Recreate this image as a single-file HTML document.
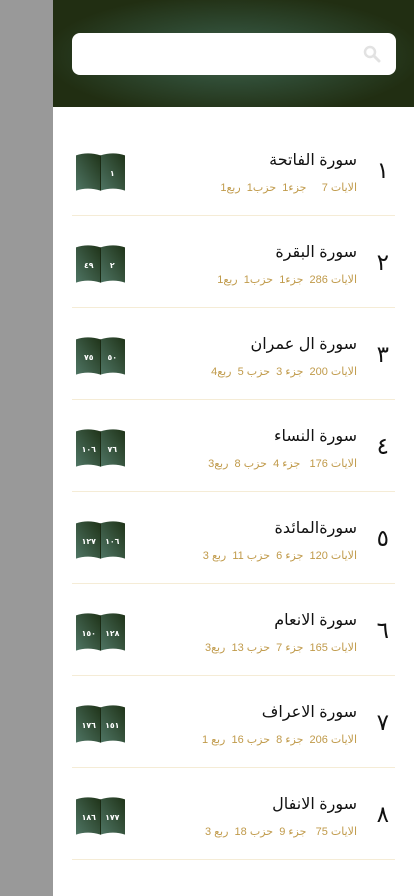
<!DOCTYPE html><html><head><meta charset="utf-8"><style>
body{margin:0;width:414px;height:896px;overflow:hidden;background:#fff;font-family:"Liberation Sans","DejaVu Sans",sans-serif;position:relative}
.side{position:absolute;left:0;top:0;width:53px;height:896px;background:#999}
.hdr{position:absolute;left:53px;top:0;width:361px;height:107px;background:radial-gradient(ellipse 190px 62px at 50% 52%,#42634a 0%,#2f4a33 45%,#212e12 100%)}
.search{position:absolute;left:72px;top:33px;width:324px;height:42px;background:#fff;border-radius:8px}
.row{position:absolute;left:72px;width:323px;height:91px;border-bottom:1px solid #f5ecd6}
.num{position:absolute;right:6px;top:34px;font-size:23px;color:#111;font-family:"DejaVu Sans",sans-serif}
.title{position:absolute;right:38px;top:26px;font-size:16px;color:#111;direction:rtl;white-space:nowrap}
.meta{position:absolute;right:38px;top:57px;font-size:11px;color:#c09a4a;direction:rtl;white-space:nowrap}
.book{position:absolute;left:4px;top:28px}
.book text{font-size:8px;fill:#fff;font-family:"DejaVu Sans",sans-serif;font-weight:bold}
</style></head><body>
<div class="side"></div>
<div class="hdr"></div>
<div class="search"><svg style="position:absolute;right:15px;top:12px" width="18" height="18" viewBox="0 0 18 18"><circle cx="7" cy="7" r="5" fill="none" stroke="#e2e2e2" stroke-width="2.5"/><path d="M11 11l5 5" stroke="#e2e2e2" stroke-width="3" stroke-linecap="round"/></svg></div>
<svg width="0" height="0" style="position:absolute"><defs><linearGradient id="g" x1="0" y1="1" x2="1" y2="0"><stop offset="0" stop-color="#4f7564"/><stop offset="1" stop-color="#1f3318"/></linearGradient></defs></svg>
<div id="rows"></div>
<script>
var d=[["١","سورة الفاتحة","الايات 7 &nbsp;&nbsp;&nbsp; جزء1 &nbsp;حزب1 &nbsp;ربع1","١",""],
["٢","سورة البقرة","الايات 286 &nbsp;جزء1 &nbsp;حزب1 &nbsp;ربع1","٢","٤٩"],
["٣","سورة ال عمران","الايات 200 &nbsp;جزء 3 &nbsp;حزب 5 &nbsp;ربع4","٥٠","٧٥"],
["٤","سورة النساء","الايات 176 &nbsp;&nbsp;جزء 4 &nbsp;حزب 8 &nbsp;ربع3","٧٦","١٠٦"],
["٥","سورةالمائدة","الايات 120 &nbsp;جزء 6 &nbsp;حزب 11 &nbsp;ربع 3","١٠٦","١٢٧"],
["٦","سورة الانعام","الايات 165 &nbsp;جزء 7 &nbsp;حزب 13 &nbsp;ربع3","١٢٨","١٥٠"],
["٧","سورة الاعراف","الايات 206 &nbsp;جزء 8 &nbsp;حزب 16 &nbsp;ربع 1","١٥١","١٧٦"],
["٨","سورة الانفال","الايات 75 &nbsp;&nbsp;جزء 9 &nbsp;حزب 18 &nbsp;ربع 3","١٧٧","١٨٦"]];
var h="";d.forEach(function(r,i){var t=124+i*92;
h+='<div class="row" style="top:'+t+'px"><div class="num">'+r[0]+'</div><div class="title">'+r[1]+'</div><div class="meta">'+r[2]+'</div>'+
'<svg class="book" width="49" height="40" viewBox="0 0 50 40"><path d="M0 3Q12 -1 25 3V39Q12 35 0 39Z" fill="url(#g)"/><path d="M25 3Q38 -1 50 3V39Q38 35 25 39Z" fill="url(#g)"/><line x1="25" y1="3" x2="25" y2="39" stroke="#1a2a14" stroke-width="1"/><text x="37" y="24" text-anchor="middle">'+r[3]+'</text><text x="13" y="24" text-anchor="middle">'+r[4]+'</text></svg></div>';});
document.getElementById("rows").innerHTML=h;
</script>
</body></html>
